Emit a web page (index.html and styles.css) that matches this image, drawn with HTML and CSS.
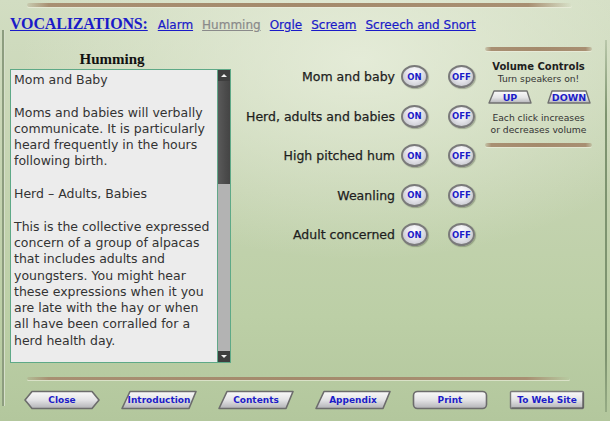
FILE: index.html
```html
<!DOCTYPE html>
<html>
<head>
<meta charset="utf-8">
<title>Vocalizations - Humming</title>
<link rel="stylesheet" href="styles.css">
</head>
<body>
<div class="page">
  <div class="frame frame-left"></div>
  <div class="frame frame-right"></div>

  <div class="rule top-rule"></div>

  <nav class="nav">
    <a class="title" href="#">VOCALIZATIONS:</a>
    <a class="link" href="#">Alarm</a>
    <span class="link current">Humming</span>
    <a class="link" href="#">Orgle</a>
    <a class="link" href="#">Scream</a>
    <a class="link" href="#">Screech and Snort</a>
  </nav>

  <div class="main">
    <section class="reader">
      <h2 class="reader-title">Humming</h2>
      <div class="box">
        <div class="text">
          <p>Mom and Baby</p>
          <p>Moms and babies will verbally communicate. It is particularly heard frequently in the hours following birth.</p>
          <p>Herd – Adults, Babies</p>
          <p>This is the collective expressed concern of a group of alpacas that includes adults and youngsters. You might hear these expressions when it you are late with the hay or when all have been corralled for a herd health day.</p>
        </div>
        <div class="scrollbar">
          <div class="arrow arrow-up"></div>
          <div class="thumb"></div>
          <div class="track"></div>
          <div class="arrow arrow-down"></div>
        </div>
      </div>
    </section>

    <section class="sounds">
      <div class="row"><span class="label">Mom and baby</span><span class="pill">ON</span><span class="pill">OFF</span></div>
      <div class="row"><span class="label">Herd, adults and babies</span><span class="pill">ON</span><span class="pill">OFF</span></div>
      <div class="row"><span class="label">High pitched hum</span><span class="pill">ON</span><span class="pill">OFF</span></div>
      <div class="row"><span class="label">Weanling</span><span class="pill">ON</span><span class="pill">OFF</span></div>
      <div class="row"><span class="label">Adult concerned</span><span class="pill">ON</span><span class="pill">OFF</span></div>
    </section>

    <aside class="volume">
      <div class="rule vol-rule"></div>
      <div class="vol-title">Volume Controls</div>
      <div class="vol-sub">Turn speakers on!</div>
      <div class="vol-buttons">
        <span class="vbtn">
          <svg viewBox="0 0 44 14" preserveAspectRatio="none"><defs><linearGradient id="gv" x1="0" y1="0" x2="0" y2="1"><stop offset="0" stop-color="#fbfbfb"/><stop offset="0.55" stop-color="#e4e4e6"/><stop offset="1" stop-color="#b4b4b8"/></linearGradient></defs><polygon points="6,1 39,1 43,13 1,13" fill="url(#gv)" stroke="#707070" stroke-width="1.4" stroke-linejoin="round"/></svg>
          <span class="vbtn-text">UP</span>
        </span>
        <span class="vbtn">
          <svg viewBox="0 0 44 14" preserveAspectRatio="none"><polygon points="5,1 39,1 43,13 1,13" fill="url(#gv)" stroke="#707070" stroke-width="1.4" stroke-linejoin="round"/></svg>
          <span class="vbtn-text">DOWN</span>
        </span>
      </div>
      <div class="vol-sub vol-help">Each click increases</div>
      <div class="vol-sub">or decreases volume</div>
      <div class="rule vol-rule vol-rule-bottom"></div>
    </aside>
  </div>

  <div class="rule bottom-rule"></div>

  <footer class="footer">
    <svg class="defs" width="0" height="0"><defs><linearGradient id="gb" x1="0" y1="0" x2="0" y2="1"><stop offset="0" stop-color="#fafafa"/><stop offset="0.5" stop-color="#e3e3e5"/><stop offset="1" stop-color="#b2b2b6"/></linearGradient></defs></svg>
    <a class="btn" href="#"><svg viewBox="0 0 76 20" preserveAspectRatio="none"><polygon points="8,1.5 68,1.5 75,10 68,18.5 8,18.5 1,10" fill="url(#gb)" stroke="#6c6c6c" stroke-width="1.6" stroke-linejoin="round"/></svg><span class="btn-text">Close</span></a>
    <a class="btn" href="#"><svg viewBox="0 0 76 20" preserveAspectRatio="none"><polygon points="9,1.5 75,1.5 68,18.5 1,18.5" fill="url(#gb)" stroke="#6c6c6c" stroke-width="1.6" stroke-linejoin="round"/></svg><span class="btn-text">Introduction</span></a>
    <a class="btn" href="#"><svg viewBox="0 0 76 20" preserveAspectRatio="none"><polygon points="9,1.5 75,1.5 68,18.5 1,18.5" fill="url(#gb)" stroke="#6c6c6c" stroke-width="1.6" stroke-linejoin="round"/></svg><span class="btn-text">Contents</span></a>
    <a class="btn" href="#"><svg viewBox="0 0 76 20" preserveAspectRatio="none"><polygon points="9,1.5 75,1.5 68,18.5 1,18.5" fill="url(#gb)" stroke="#6c6c6c" stroke-width="1.6" stroke-linejoin="round"/></svg><span class="btn-text">Appendix</span></a>
    <a class="btn" href="#"><svg viewBox="0 0 76 20" preserveAspectRatio="none"><rect x="1.5" y="1.5" width="73" height="17" rx="4" fill="url(#gb)" stroke="#6c6c6c" stroke-width="1.6"/></svg><span class="btn-text">Print</span></a>
    <a class="btn" href="#"><svg viewBox="0 0 76 20" preserveAspectRatio="none"><rect x="1.5" y="1.5" width="73" height="17" rx="1" fill="url(#gb)" stroke="#7a7a7a" stroke-width="1.4"/><line x1="2.5" y1="18" x2="74" y2="18" stroke="#555" stroke-width="1.2"/><line x1="74" y1="2.5" x2="74" y2="18" stroke="#555" stroke-width="1.2"/></svg><span class="btn-text">To Web Site</span></a>
  </footer>
</div>
</body>
</html>
```

FILE: styles.css
```css
html, body {
  margin: 0;
  padding: 0;
}

body {
  width: 610px;
  height: 421px;
  overflow: hidden;
  background: #bfd1a9;
}

.page {
  position: relative;
  width: 610px;
  height: 421px;
  overflow: hidden;
  display: flex;
  flex-direction: column;
  font-family: "DejaVu Sans", Verdana, sans-serif;
  background:
    radial-gradient(ellipse 340px 200px at 360px 60px, rgba(232, 238, 220, 0.85), rgba(232, 238, 220, 0) 100%),
    linear-gradient(180deg, #d2ddc2 0%, #c4d3b0 45%, #bccfa6 75%, #b3c79d 100%);
}

.frame {
  position: absolute;
  width: 2px;
}

.frame-left {
  left: 2px;
  top: 30px;
  height: 376px;
  background: #8d9d7f;
  box-shadow: 1px 0 0 #d6dfca;
}

.frame-right {
  left: 605px;
  top: 40px;
  height: 372px;
  background: linear-gradient(180deg, rgba(120, 142, 108, 0.3), #7d936f 20%, #7d936f 85%, rgba(120, 142, 108, 0.5));
}

.rule {
  height: 4px;
  border-radius: 2px;
  background: linear-gradient(90deg, rgba(160, 134, 104, 0.2) 0%, #a88f72 4%, #a48a6c 50%, #a88f72 92%, rgba(160, 134, 104, 0) 100%);
  box-shadow: 0 1px 0 rgba(240, 240, 225, 0.6);
}

.top-rule {
  margin: 3px 0 0 27px;
  width: 545px;
}

/* navigation */
.nav {
  display: flex;
  align-items: baseline;
  gap: 9px;
  margin-top: 8px;
  padding-left: 10px;
  height: 20px;
}

.title {
  font-family: "Liberation Serif", "Times New Roman", serif;
  font-weight: bold;
  font-size: 16px;
  letter-spacing: -0.15px;
  color: #1a1ac8;
  text-decoration: underline;
  margin-right: 1px;
}

.link {
  font-size: 12px;
  color: #1a1ac8;
  text-decoration: underline;
  -webkit-text-stroke: 0.2px currentColor;
}

.link.current {
  color: #8a8a8a;
}

/* main area */
.main {
  display: flex;
  margin-top: 12px;
}

.reader {
  margin-left: 10px;
  width: 221px;
  display: flex;
  flex-direction: column;
}

.reader-title {
  margin: 0;
  height: 22px;
  line-height: 24px;
  text-align: center;
  padding-right: 17px;
  font-family: "Liberation Serif", "Times New Roman", serif;
  font-weight: bold;
  font-size: 15px;
  color: #111;
}

.box {
  display: flex;
  height: 292px;
  border: 1px solid #5ea987;
  background: #ececec;
}

.text {
  flex: 1;
  padding: 2px 1px 0 3px;
  font-size: 12.5px;
  line-height: 16.3px;
  color: #333;
  overflow: hidden;
}

.text p {
  margin: 0 0 16.3px;
}

.scrollbar {
  width: 12px;
  display: flex;
  flex-direction: column;
  border-left: 1px solid #62a889;
}

.arrow {
  height: 11px;
  background: #3e3e3e;
  display: flex;
  align-items: center;
  justify-content: center;
}

.arrow::after {
  content: "";
  width: 0;
  height: 0;
  border-left: 3px solid transparent;
  border-right: 3px solid transparent;
}

.arrow-up::after {
  border-bottom: 3px solid #f2f2f2;
}

.arrow-down::after {
  border-top: 3px solid #f2f2f2;
}

.thumb {
  height: 103px;
  background: linear-gradient(90deg, #5a5a5a, #4c4c4c 60%, #444);
}

.track {
  flex: 1;
  background: #b3b3b3;
}

/* sound rows */
.sounds {
  width: 249px;
  padding-top: 10px;
  padding-right: 5px;
  box-sizing: border-box;
  display: flex;
  flex-direction: column;
}

.row {
  height: 39.5px;
  display: flex;
  align-items: center;
  justify-content: flex-end;
}

.label {
  font-size: 12.5px;
  color: #1e1e1e;
  -webkit-text-stroke: 0.25px #1e1e1e;
  margin-right: 6px;
}

.pill {
  width: 27px;
  height: 23px;
  box-sizing: border-box;
  border-radius: 50%;
  border: 2px solid #7a7a7a;
  background: radial-gradient(ellipse at 50% 30%, #ffffff 0%, #e6e6ec 45%, #b6b6be 100%);
  box-shadow: 1px 1px 1px rgba(60, 70, 50, 0.35);
  display: flex;
  align-items: center;
  justify-content: center;
  font-size: 8.5px;
  font-weight: bold;
  color: #1c1cc8;
}

.pill + .pill {
  margin-left: 20px;
}

/* volume */
.volume {
  width: 107px;
  margin-left: 5px;
  display: flex;
  flex-direction: column;
  align-items: stretch;
  text-align: center;
}

.vol-rule {
  width: 107px;
  margin: 0;
  background: linear-gradient(90deg, rgba(160, 134, 104, 0.3) 0%, #a88f72 6%, #a48a6c 50%, #a88f72 94%, rgba(160, 134, 104, 0.3) 100%);
}

.vol-title {
  margin-top: 10px;
  height: 12px;
  line-height: 12px;
  font-size: 10px;
  font-weight: bold;
  color: #1e1e1e;
}

.vol-sub {
  height: 12px;
  line-height: 12px;
  font-size: 9.2px;
  color: #333;
}

.vol-help {
  margin-top: 8px;
}

.vol-buttons {
  display: flex;
  justify-content: space-between;
  margin-top: 5px;
  padding: 0 1px 0 3px;
}

.vbtn {
  position: relative;
  width: 44px;
  height: 14px;
  display: flex;
  align-items: center;
  justify-content: center;
}

.vbtn svg {
  position: absolute;
  left: 0;
  top: 0;
  width: 100%;
  height: 100%;
}

.vbtn-text {
  position: relative;
  font-size: 9.5px;
  font-weight: bold;
  color: #1c1cc8;
}

.vol-rule-bottom {
  margin-top: 7px;
}

/* footer */
.bottom-rule {
  margin: 14px 0 0 27px;
  width: 543px;
  height: 3px;
}

.footer {
  display: flex;
  gap: 21px;
  margin-top: 10px;
  padding-left: 24px;
}

.defs {
  position: absolute;
}

.btn {
  position: relative;
  width: 76px;
  height: 20px;
  display: flex;
  align-items: center;
  justify-content: center;
  text-decoration: none;
}

.btn svg {
  position: absolute;
  left: 0;
  top: 0;
  width: 100%;
  height: 100%;
}

.btn-text {
  position: relative;
  font-size: 9px;
  font-weight: bold;
  color: #1c1cc8;
}
```
